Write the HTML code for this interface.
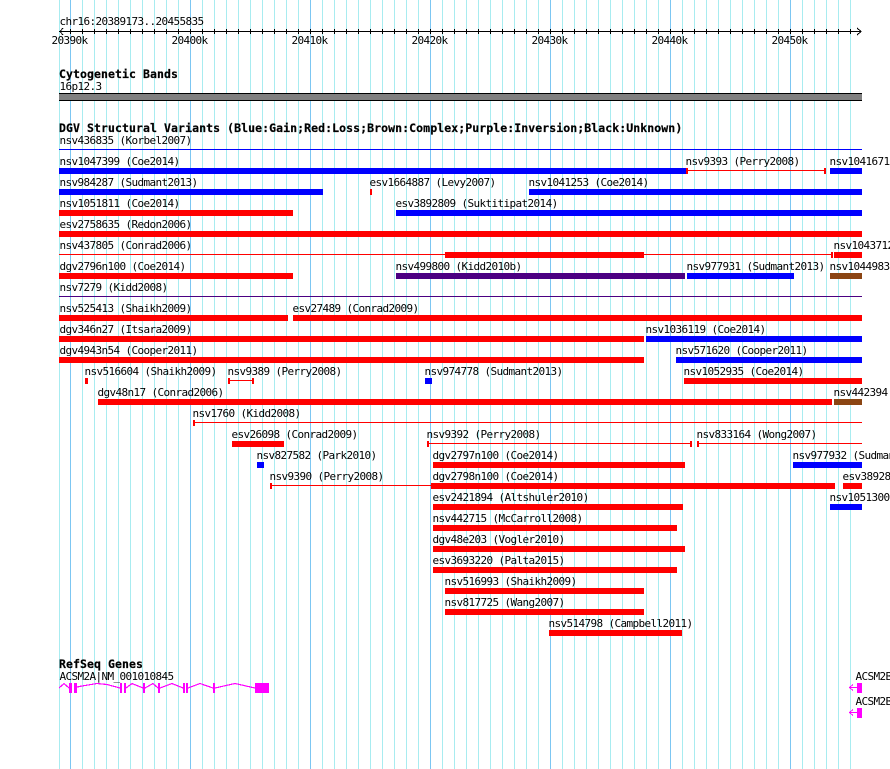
<!DOCTYPE html>
<html><head><meta charset="utf-8"><style>
html,body{margin:0;padding:0;background:#fff;width:890px;height:769px;overflow:hidden}
.a{position:absolute;top:0;height:769px}
svg{position:absolute;left:0;top:0}
text{font-family:"DejaVu Sans Mono","Liberation Mono",monospace;font-size:11px;letter-spacing:-.62px;fill:#000;white-space:pre}
text.b{font-weight:bold;font-size:11.5px;letter-spacing:.08px;stroke:#000;stroke-width:.2px}
rect{shape-rendering:crispEdges}
.g{shape-rendering:crispEdges}
.B{fill:#00f}.R{fill:#f00}.P{fill:#4b0082}.N{fill:#8b4513}.M{fill:#f0f}
</style></head><body>
<div class="a" style="left:59px;width:1px;background:#a8ecf0"></div>
<div class="a" style="left:70px;width:781px;background:repeating-linear-gradient(90deg,#a8ecf0 0 1px,transparent 1px 12px)"></div>
<div class="a" style="left:70px;width:721px;background:repeating-linear-gradient(90deg,#7cc6f2 0 1px,transparent 1px 120px)"></div>
<div style="position:absolute;left:70px;top:29px;width:781px;height:5px;background:repeating-linear-gradient(90deg,#000 0 1px,transparent 1px 12px)"></div>
<svg width="890" height="769" viewBox="0 0 890 769">
<text x="59.5" y="25">chr16:20389173..20455835</text>
<rect x="59" y="31" width="802" height="1" fill="#000"/>
<path class="g" d="M63 28L60 31.5L63 35M857 28L861 31.5L857 35" fill="none" stroke="#000" stroke-width="1"/>
<text x="51.5" y="44">20390k</text><text x="171.5" y="44">20400k</text><text x="291.5" y="44">20410k</text><text x="411.5" y="44">20420k</text><text x="531.5" y="44">20430k</text><text x="651.5" y="44">20440k</text><text x="771.5" y="44">20450k</text>

<text class="b" x="59" y="78">Cytogenetic Bands</text>
<text x="59.5" y="90">16p12.3</text>
<rect x="59" y="93" width="803" height="8" fill="#000"/><rect x="59" y="94" width="803" height="6" fill="#808080"/>

<text class="b" x="59" y="132">DGV Structural Variants (Blue:Gain;Red:Loss;Brown:Complex;Purple:Inversion;Black:Unknown)</text>

<text x="59.5" y="144">nsv436835 (Korbel2007)</text><rect class="B" x="59" y="149" width="803" height="1"/>

<text x="59.5" y="165">nsv1047399 (Coe2014)</text><rect class="B" x="59" y="168" width="627" height="6"/>
<text x="685.5" y="165">nsv9393 (Perry2008)</text><rect class="R" x="686" y="168" width="2" height="6"/><rect class="R" x="686" y="170" width="140" height="1"/><rect class="R" x="824" y="168" width="2" height="6"/>
<text x="829.5" y="165">nsv1041671</text><rect class="B" x="830" y="168" width="32" height="6"/>

<text x="59.5" y="186">nsv984287 (Sudmant2013)</text><rect class="B" x="59" y="189" width="264" height="6"/>
<text x="369.5" y="186">esv1664887 (Levy2007)</text><rect class="R" x="370" y="189" width="2" height="6"/>
<text x="528.5" y="186">nsv1041253 (Coe2014)</text><rect class="B" x="529" y="189" width="333" height="6"/>

<text x="59.5" y="207">nsv1051811 (Coe2014)</text><rect class="R" x="59" y="210" width="234" height="6"/>
<text x="395.5" y="207">esv3892809 (Suktitipat2014)</text><rect class="B" x="396" y="210" width="466" height="6"/>

<text x="59.5" y="228">esv2758635 (Redon2006)</text><rect class="R" x="59" y="231" width="803" height="6"/>

<text x="59.5" y="249">nsv437805 (Conrad2006)</text><rect class="R" x="59" y="254" width="772" height="1"/><rect class="R" x="445" y="252" width="199" height="6"/><rect class="R" x="831" y="252" width="2" height="6"/>
<text x="833.5" y="249">nsv1043712</text><rect class="R" x="834" y="252" width="28" height="6"/>

<text x="59.5" y="270">dgv2796n100 (Coe2014)</text><rect class="R" x="59" y="273" width="234" height="6"/>
<text x="395.5" y="270">nsv499800 (Kidd2010b)</text><rect class="P" x="396" y="273" width="289" height="6"/>
<text x="686.5" y="270">nsv977931 (Sudmant2013)</text><rect class="B" x="687" y="273" width="107" height="6"/>
<text x="829.5" y="270">nsv1044983</text><rect class="N" x="830" y="273" width="32" height="6"/>

<text x="59.5" y="291">nsv7279 (Kidd2008)</text><rect class="P" x="59" y="296" width="803" height="1"/>

<text x="59.5" y="312">nsv525413 (Shaikh2009)</text><rect class="R" x="59" y="315" width="229" height="6"/>
<text x="292.5" y="312">esv27489 (Conrad2009)</text><rect class="R" x="293" y="315" width="569" height="6"/>

<text x="59.5" y="333">dgv346n27 (Itsara2009)</text><rect class="R" x="59" y="336" width="585" height="6"/>
<text x="645.5" y="333">nsv1036119 (Coe2014)</text><rect class="B" x="646" y="336" width="216" height="6"/>

<text x="59.5" y="354">dgv4943n54 (Cooper2011)</text><rect class="R" x="59" y="357" width="585" height="6"/>
<text x="675.5" y="354">nsv571620 (Cooper2011)</text><rect class="B" x="676" y="357" width="186" height="6"/>

<text x="84.5" y="375">nsv516604 (Shaikh2009)</text><rect class="R" x="85" y="378" width="3" height="6"/>
<text x="227.5" y="375">nsv9389 (Perry2008)</text><rect class="R" x="228" y="378" width="2" height="6"/><rect class="R" x="228" y="380" width="26" height="1"/><rect class="R" x="252" y="378" width="2" height="6"/>
<text x="424.5" y="375">nsv974778 (Sudmant2013)</text><rect class="B" x="425" y="378" width="7" height="6"/>
<text x="683.5" y="375">nsv1052935 (Coe2014)</text><rect class="R" x="684" y="378" width="178" height="6"/>

<text x="97.5" y="396">dgv48n17 (Conrad2006)</text><rect class="R" x="98" y="399" width="734" height="6"/>
<text x="833.5" y="396">nsv442394</text><rect class="N" x="834" y="399" width="28" height="6"/>

<text x="192.5" y="417">nsv1760 (Kidd2008)</text><rect class="R" x="193" y="420" width="2" height="6"/><rect class="R" x="193" y="422" width="669" height="1"/>

<text x="231.5" y="438">esv26098 (Conrad2009)</text><rect class="R" x="232" y="441" width="52" height="6"/>
<text x="426.5" y="438">nsv9392 (Perry2008)</text><rect class="R" x="427" y="441" width="2" height="6"/><rect class="R" x="427" y="443" width="265" height="1"/><rect class="R" x="690" y="441" width="2" height="6"/>
<text x="696.5" y="438">nsv833164 (Wong2007)</text><rect class="R" x="697" y="441" width="2" height="6"/><rect class="R" x="697" y="443" width="165" height="1"/>

<text x="256.5" y="459">nsv827582 (Park2010)</text><rect class="B" x="257" y="462" width="7" height="6"/>
<text x="432.5" y="459">dgv2797n100 (Coe2014)</text><rect class="R" x="433" y="462" width="252" height="6"/>
<text x="792.5" y="459">nsv977932 (Sudmant2013)</text><rect class="B" x="793" y="462" width="69" height="6"/>

<text x="269.5" y="480">nsv9390 (Perry2008)</text><rect class="R" x="270" y="483" width="2" height="6"/><rect class="R" x="270" y="485" width="161" height="1"/>
<text x="432.5" y="480">dgv2798n100 (Coe2014)</text><rect class="R" x="431" y="483" width="404" height="6"/>
<text x="842.5" y="480">esv38928</text><rect class="R" x="843" y="483" width="19" height="6"/>

<text x="432.5" y="501">esv2421894 (Altshuler2010)</text><rect class="R" x="433" y="504" width="250" height="6"/>
<text x="829.5" y="501">nsv1051300</text><rect class="B" x="830" y="504" width="32" height="6"/>

<text x="432.5" y="522">nsv442715 (McCarroll2008)</text><rect class="R" x="433" y="525" width="244" height="6"/>
<text x="432.5" y="543">dgv48e203 (Vogler2010)</text><rect class="R" x="433" y="546" width="252" height="6"/>
<text x="432.5" y="564">esv3693220 (Palta2015)</text><rect class="R" x="433" y="567" width="244" height="6"/>
<text x="444.5" y="585">nsv516993 (Shaikh2009)</text><rect class="R" x="445" y="588" width="199" height="6"/>
<text x="444.5" y="606">nsv817725 (Wang2007)</text><rect class="R" x="445" y="609" width="199" height="6"/>
<text x="548.5" y="627">nsv514798 (Campbell2011)</text><rect class="R" x="549" y="630" width="133" height="6"/>

<text class="b" x="59" y="668">RefSeq Genes</text>
<text x="59.5" y="680">ACSM2A|NM_001010845</text>
<path class="g" d="M59 688L64 683.5L69 688M77 687L82 686L97 683.5L107 684.5L120 688M126 688L132 683.5L143 688M145 688L153 683.5L158 688M160 688L172 683.5L183 688M188 688L200 683.5L213 688M215 688L235 683.5L255 688" fill="none" stroke="#f0f" stroke-width="1.2"/>
<rect class="M" x="69" y="683" width="3" height="10"/><rect class="M" x="74" y="683" width="3" height="10"/><rect class="M" x="120" y="683" width="2" height="10"/><rect class="M" x="124" y="683" width="2" height="10"/><rect class="M" x="143" y="683" width="2" height="10"/><rect class="M" x="158" y="683" width="2" height="10"/><rect class="M" x="183" y="683" width="2" height="10"/><rect class="M" x="186" y="683" width="2" height="10"/><rect class="M" x="213" y="683" width="2" height="10"/><rect class="M" x="255" y="683" width="14" height="10"/>

<text x="855.5" y="680">ACSM2B</text>
<rect class="M" x="857" y="683" width="5" height="10"/><rect class="M" x="850" y="687" width="7" height="1"/><path class="g" d="M853 684.5L849.5 687.5L853 690.5" fill="none" stroke="#f0f"/>
<text x="855.5" y="705">ACSM2B</text>
<rect class="M" x="857" y="708" width="5" height="10"/><rect class="M" x="850" y="712" width="7" height="1"/><path class="g" d="M853 709.5L849.5 712.5L853 715.5" fill="none" stroke="#f0f"/>
</svg>
</body></html>
